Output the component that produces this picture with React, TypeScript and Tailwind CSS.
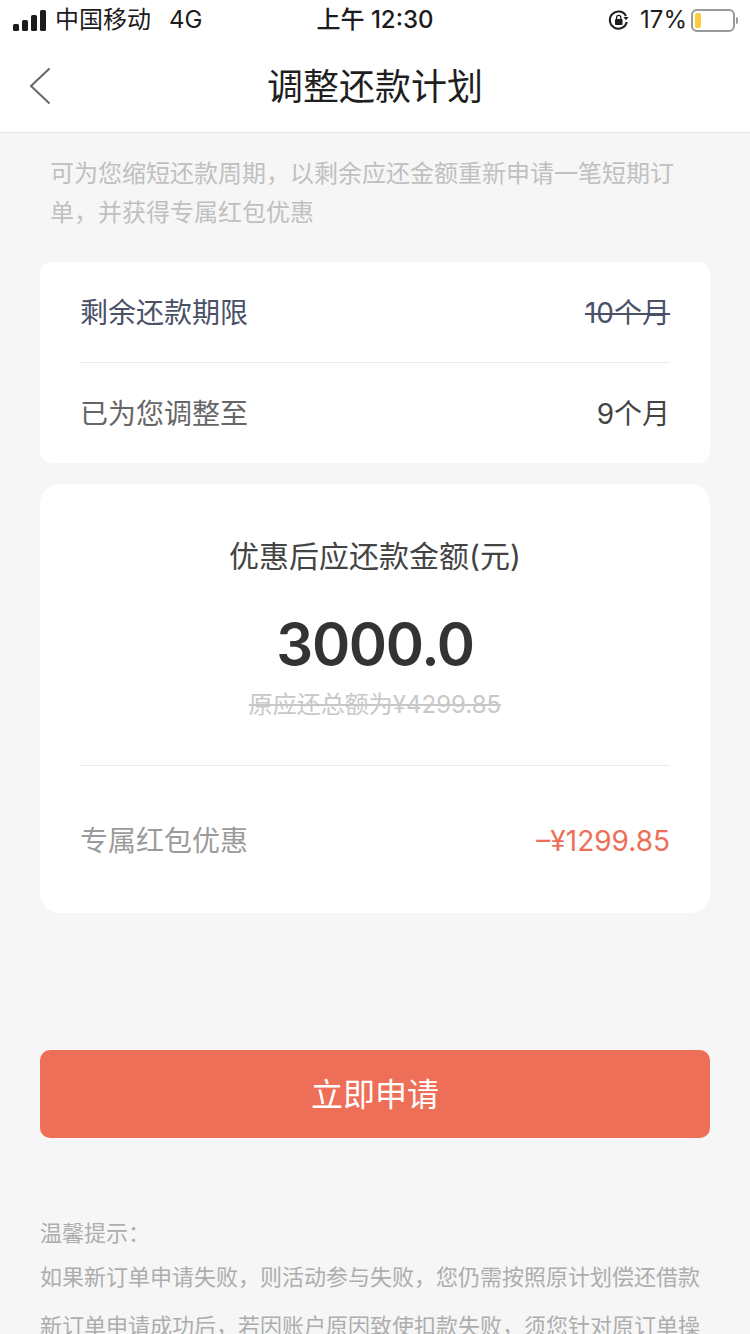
import React from "react";

const font = { fontFamily: 'Inter, "Noto Sans CJK SC", sans-serif' };

function StatusBar() {
  return (
    <div className="h-10 flex items-center justify-between relative text-[24px] leading-none text-[#1c1c1c]">
      <div className="flex items-center pl-[13px]">
        <div className="flex items-end gap-[3px] h-[22px] w-[34px]">
          <span className="w-[6px] h-[7px] rounded-[1.5px] bg-[#1c1c1c]" />
          <span className="w-[6px] h-[11px] rounded-[1.5px] bg-[#1c1c1c]" />
          <span className="w-[6px] h-[16px] rounded-[1.5px] bg-[#1c1c1c]" />
          <span className="w-[6px] h-[21px] rounded-[1.5px] bg-[#1c1c1c]" />
        </div>
        <span className="ml-[8px]">中国移动</span>
        <span className="ml-[18px]">4G</span>
      </div>
      <span className="absolute left-0 right-0 text-center font-medium">上午 12:30</span>
      <div className="flex items-center pr-[12px]">
        <svg width="22" height="22" viewBox="0 0 22 22" fill="none">
          <path d="M18 7a8.6 8.6 0 1 0 .8 6" stroke="#1c1c1c" strokeWidth="2" />
          <path d="M15.5 8h5l-2.5 3.2z" fill="#1c1c1c" />
          <rect x="7" y="10" width="7.5" height="6" rx="1" fill="#1c1c1c" />
          <path d="M8.6 10V8.4a2.1 2.1 0 0 1 4.2 0V10" stroke="#1c1c1c" strokeWidth="1.3" />
        </svg>
        <span className="ml-[10px]">17%</span>
        <div className="ml-[4px] w-[44px] h-[23px] rounded-[6px] border-2 border-[#9a9a9a] p-[2px]">
          <div className="w-[6px] h-full rounded-[2px] bg-[#fccb3c]" />
        </div>
        <span className="ml-[1px] w-[2px] h-[7px] rounded-r-sm bg-[#9a9a9a]" />
      </div>
    </div>
  );
}

function NavBar() {
  return (
    <div className="h-[93px] relative flex items-center justify-center border-b border-[#e3e3e3]">
      <svg className="absolute left-[29px] top-[27px]" width="22" height="38" viewBox="0 0 22 38" fill="none">
        <path d="M20.5 1.5 2 19l18.5 17.5" stroke="#666666" strokeWidth="2" />
      </svg>
      <h1 className="text-[36px] leading-none font-normal text-[#1f1f1f] mt-[1px]">调整还款计划</h1>
    </div>
  );
}

function PlanRow({ label, value, strike }: { label: string; value: string; strike?: boolean }) {
  return (
    <div className="h-[100px] pt-[2px] flex items-center justify-between text-[28px]">
      <span className={strike ? "text-[#4a5068]" : "text-[#666666]"}>{label}</span>
      <span className={strike ? "text-[#4a5068] line-through" : "text-[#444444]"}>{value}</span>
    </div>
  );
}

export default function App() {
  return (
    <div className="w-[750px] h-[1334px] overflow-hidden bg-[#f6f6f6]" style={font}>
      <div className="bg-white">
        <StatusBar />
        <NavBar />
      </div>

      <p className="ml-[50px] mr-[51px] mt-[21px] text-[24px] leading-[39px] text-[#c0c0c0]">
        可为您缩短还款周期，以剩余应还金额重新申请一笔短期订单，并获得专属红包优惠
      </p>

      <section className="mx-10 mt-[30px] px-10 bg-white rounded-xl">
        <div className="border-b border-[#ececec]">
          <PlanRow label="剩余还款期限" value="10个月" strike />
        </div>
        <PlanRow label="已为您调整至" value="9个月" />
      </section>

      <section className="mx-10 mt-[21px] px-10 h-[429px] bg-white rounded-[20px]">
        <div className="h-[282px] border-b border-[#ececec] flex flex-col items-center">
          <div className="mt-[52px] text-[30px] leading-[40px] text-[#444444]">优惠后应还款金额(元)</div>
          <div className="mt-[30px] text-[58px] leading-[76px] font-semibold tracking-[-1.3px] text-[#333333]">3000.0</div>
          <div className="mt-[8px] text-[24px] leading-[30px] text-[#c8c8c8] line-through">原应还总额为¥4299.85</div>
        </div>
        <div className="h-[147px] pt-[2px] flex items-center justify-between">
          <span className="text-[28px] text-[#9b9b9b]">专属红包优惠</span>
          <span className="text-[28px] text-[#ee6f58]">–¥1299.85</span>
        </div>
      </section>

      <button className="block mx-10 mt-[137px] pt-[2px] w-[670px] h-[88px] rounded-[10px] bg-[#ee6f58] text-white text-[32px]">
        立即申请
      </button>

      <div className="mx-10 mt-[79px] text-[22px] text-[#adadad]">
        <div className="leading-[32px]">温馨提示：</div>
        <div className="mt-[4px] leading-[49px]">
          <p>如果新订单申请失败，则活动参与失败，您仍需按照原计划偿还借款</p>
          <p>新订单申请成功后，若因账户原因致使扣款失败，须您针对原订单操作</p>
        </div>
      </div>
    </div>
  );
}
